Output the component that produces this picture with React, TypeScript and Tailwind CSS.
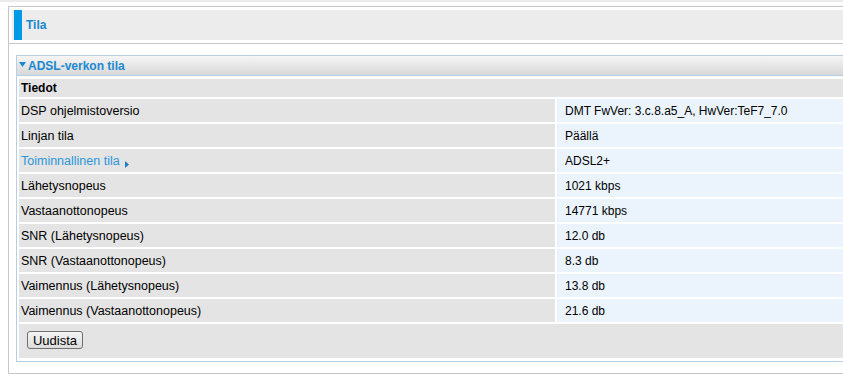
const rows: { label: string; value: string; link?: boolean }[] = [
  { label: "DSP ohjelmistoversio", value: "DMT FwVer: 3.c.8.a5_A, HwVer:TeF7_7.0" },
  { label: "Linjan tila", value: "Päällä" },
  { label: "Toiminnallinen tila", value: "ADSL2+", link: true },
  { label: "Lähetysnopeus", value: "1021 kbps" },
  { label: "Vastaanottonopeus", value: "14771 kbps" },
  { label: "SNR (Lähetysnopeus)", value: "12.0 db" },
  { label: "SNR (Vastaanottonopeus)", value: "8.3 db" },
  { label: "Vaimennus (Lähetysnopeus)", value: "13.8 db" },
  { label: "Vaimennus (Vastaanottonopeus)", value: "21.6 db" },
];

export default function App() {
  return (
    <div
      className="w-[843px] h-[378px] overflow-hidden bg-white text-[12px] text-black"
      style={{ fontFamily: '"Liberation Sans", Arial, sans-serif' }}
    >
      <div className="h-[2px] bg-[#ebebeb]" />
      <div className="w-[900px] mt-[4px] ml-[8px] border border-[#c6c6c6]">
        {/* page title */}
        <div className="p-[3px] border-b border-[#c6c6c6]">
          <div className="h-[30px] flex items-center bg-[#ececec] pl-[2px]">
            <div className="w-[8px] h-full bg-[#0099e5]" />
            <span className="ml-[4px] font-bold text-[#1787d0]">Tila</span>
          </div>
        </div>

        {/* content */}
        <div className="pt-[11px] pl-[7px] pb-[11px]">
          <div className="border border-[#b7cfe5]">
            <div className="h-[20px] flex items-center border-b border-[#b7cfe5] bg-gradient-to-b from-[#f6f6f6] to-[#d8d8d8] pl-[2px]">
              <svg width="7" height="5" viewBox="0 0 7 5" className="mr-[2px] mt-[-2px]">
                <path d="M0 0h7L3.5 5z" fill="#1c88d2" />
              </svg>
              <span className="font-bold text-[#1c88d2]">ADSL-verkon tila</span>
            </div>
            <div className="flex flex-col gap-[2px] p-[2px] pt-[3px] pb-[3px]">
              <div className="h-[18px] flex items-center bg-[#e4e4e4] px-[2px] font-bold">Tiedot</div>
              {rows.map((r) => (
                <div key={r.label} className="flex gap-[2px] h-[23px]">
                  <div className="w-[536px] flex items-center bg-[#e4e4e4] px-[2px] pt-px text-[12.5px]">
                    {r.link ? (
                      <span className="text-[#2d95dc] flex items-center">
                        Toiminnallinen tila
                        <svg width="4" height="7" viewBox="0 0 4 7" className="ml-[5px] mt-[7px]">
                          <path d="M0 0l4 3.5L0 7z" fill="#1c7fc8" />
                        </svg>
                      </span>
                    ) : (
                      r.label
                    )}
                  </div>
                  <div className="flex-1 flex items-center bg-[#ebf4fd] pl-[8px]">{r.value}</div>
                </div>
              ))}
              <div className="h-[34px] bg-[#e4e4e4] pl-[8px] pt-[7px]">
                <button className="w-[56px] h-[18px] rounded-[3px] border border-[#707070] bg-gradient-to-b from-[#f4f4f4] to-[#dcdcdc] text-[13px] leading-none text-black">
                  Uudista
                </button>
              </div>
            </div>
          </div>
        </div>
      </div>
    </div>
  );
}
